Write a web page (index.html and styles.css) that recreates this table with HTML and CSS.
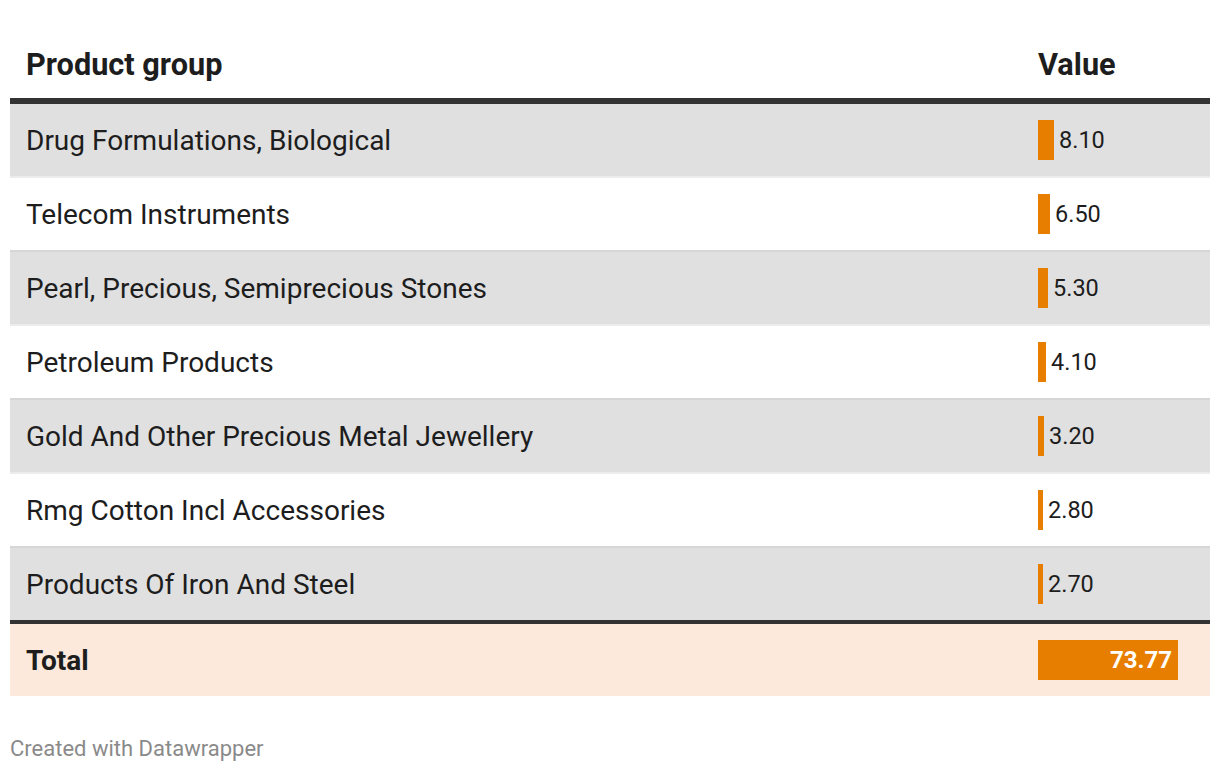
FILE: index.html
```html
<!DOCTYPE html>
<html>
<head>
<meta charset="utf-8">
<link rel="stylesheet" href="styles.css">
</head>
<body>
<div class="chart">
  <div class="table">
    <div class="row head">
      <div class="cell name">Product group</div>
      <div class="cell val">Value</div>
    </div>
    <div class="row body odd">
      <div class="cell name">Drug Formulations, Biological</div>
      <div class="cell val"><span class="bar" style="width:16px"></span><span class="num">8.10</span></div>
    </div>
    <div class="row body even">
      <div class="cell name">Telecom Instruments</div>
      <div class="cell val"><span class="bar" style="width:12px"></span><span class="num">6.50</span></div>
    </div>
    <div class="row body odd">
      <div class="cell name">Pearl, Precious, Semiprecious Stones</div>
      <div class="cell val"><span class="bar" style="width:10px"></span><span class="num">5.30</span></div>
    </div>
    <div class="row body even">
      <div class="cell name">Petroleum Products</div>
      <div class="cell val"><span class="bar" style="width:8px"></span><span class="num">4.10</span></div>
    </div>
    <div class="row body odd">
      <div class="cell name">Gold And Other Precious Metal Jewellery</div>
      <div class="cell val"><span class="bar" style="width:6px"></span><span class="num">3.20</span></div>
    </div>
    <div class="row body even">
      <div class="cell name">Rmg Cotton Incl Accessories</div>
      <div class="cell val"><span class="bar" style="width:5px"></span><span class="num">2.80</span></div>
    </div>
    <div class="row body odd last">
      <div class="cell name">Products Of Iron And Steel</div>
      <div class="cell val"><span class="bar" style="width:5px"></span><span class="num">2.70</span></div>
    </div>
    <div class="row total">
      <div class="cell name">Total</div>
      <div class="cell val"><span class="totalbar">73.77</span></div>
    </div>
  </div>
  <div class="footer">Created with Datawrapper</div>
</div>
</body>
</html>
```

FILE: styles.css
```css
html, body {
  margin: 0;
  padding: 0;
  background: #ffffff;
}
body {
  font-family: Roboto, "Liberation Sans", sans-serif;
  color: #1d1d1d;
}
.chart {
  padding: 0 10px;
}
.table {
  display: flex;
  flex-direction: column;
}
.row {
  display: flex;
  align-items: center;
}
.cell.name {
  flex: 1;
  padding-left: 16px;
}
.cell.val {
  width: 172px;
  display: flex;
  align-items: center;
}
.head {
  height: 104px;
  padding-top: 30px;
  box-sizing: border-box;
  border-bottom: 6px solid #333333;
  font-weight: 700;
  font-size: 30.7px;
}
.head .cell.val {
  padding-left: 1px;
}
.body {
  height: 74px;
  box-sizing: border-box;
  font-size: 28px;
}
.odd {
  background: #e0e0e0;
  border-bottom: 2px solid #ececec;
}
.even {
  background: #ffffff;
  border-bottom: 2px solid #d6d6d6;
}
.body.last {
  height: 72px;
  border-bottom: none;
}
.bar {
  display: block;
  height: 40px;
  background: #e87e00;
  flex: none;
}
.num {
  font-size: 23.5px;
  margin-left: 5px;
}
.total {
  height: 76px;
  box-sizing: border-box;
  border-top: 4px solid #333333;
  background: #fce9dc;
  font-size: 28px;
  font-weight: 700;
}
.totalbar {
  display: block;
  width: 140px;
  height: 40px;
  line-height: 40px;
  box-sizing: border-box;
  padding-right: 6px;
  text-align: right;
  background: #e87e00;
  color: #ffffff;
  font-size: 24px;
  font-weight: 700;
}
.footer {
  margin-top: 40px;
  font-size: 22px;
  color: #8a8a8a;
}
```
